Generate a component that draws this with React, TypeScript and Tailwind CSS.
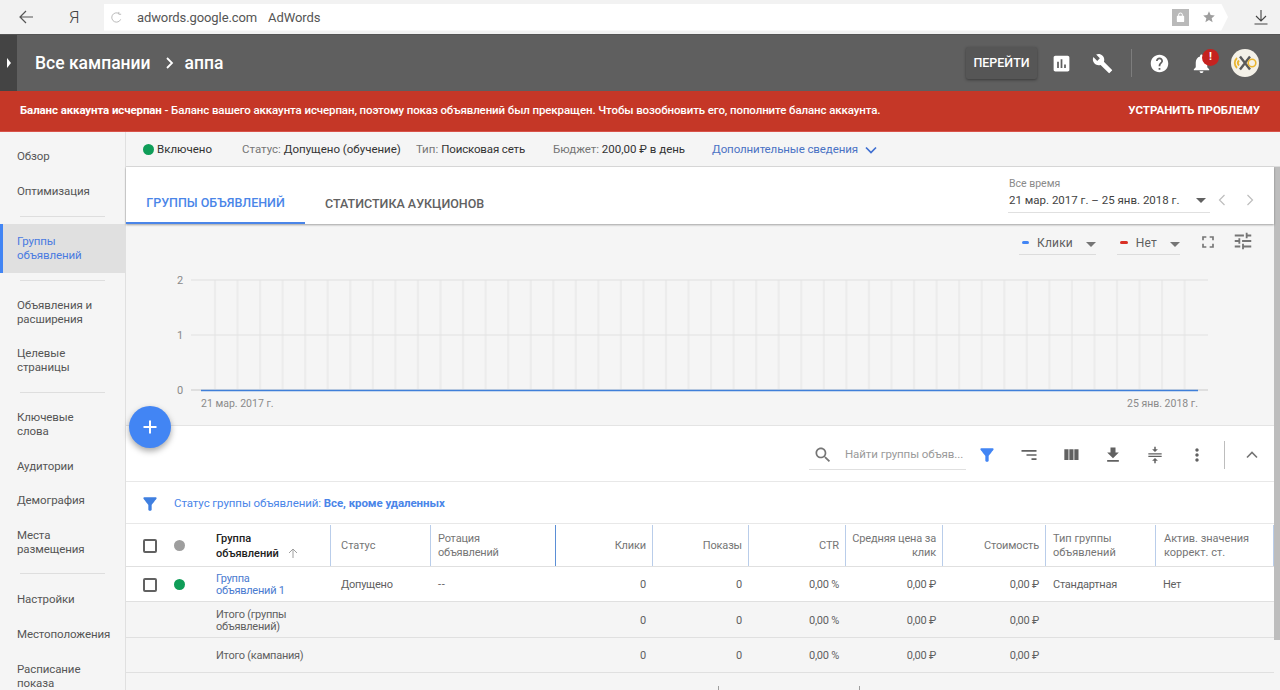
import React from "react";

const P: Record<string, string> = {
  chart: "M19 3H5c-1.1 0-2 .9-2 2v14c0 1.1.9 2 2 2h14c1.1 0 2-.9 2-2V5c0-1.1-.9-2-2-2zM9 17H7v-7h2v7zm4 0h-2V7h2v10zm4 0h-2v-4h2v4z",
  wrench: "M22.7 19l-9.1-9.1c.9-2.3.4-5-1.5-6.9-2-2-5-2.4-7.4-1.3L9 6 6 9 1.6 4.7C.4 7.1.9 10.1 2.9 12.1c1.9 1.9 4.6 2.4 6.9 1.5l9.1 9.1c.4.4 1 .4 1.4 0l2.3-2.3c.5-.4.5-1.1.1-1.4z",
  help: "M12 2C6.48 2 2 6.48 2 12s4.48 10 10 10 10-4.48 10-10S17.52 2 12 2zm1 17h-2v-2h2v2zm2.07-7.75l-.9.92C13.45 12.9 13 13.5 13 15h-2v-.5c0-1.1.45-2.1 1.17-2.83l1.24-1.26c.37-.36.59-.86.59-1.41 0-1.1-.9-2-2-2s-2 .9-2 2H8c0-2.21 1.79-4 4-4s4 1.79 4 4c0 .88-.36 1.68-.93 2.25z",
  bell: "M12 22c1.1 0 2-.9 2-2h-4c0 1.1.89 2 2 2zm6-6v-5c0-3.07-1.64-5.64-4.5-6.32V4c0-.83-.67-1.5-1.5-1.5s-1.5.67-1.5 1.5v.68C7.63 5.36 6 7.92 6 11v5l-2 2v1h16v-1l-2-2z",
  filter: "M4.25 5.61C6.27 8.2 10 13 10 13v6c0 .55.45 1 1 1h2c.55 0 1-.45 1-1v-6s3.72-4.8 5.74-7.39C20.25 4.95 19.78 4 18.95 4H5.04c-.83 0-1.3.95-.79 1.61z",
  sort: "M21 18h-6v-2h6v2zM21 6v2H3V6h18zm0 7H9v-2h12v2z",
  cols: "M10 18h5V5h-5v13zm-6 0h5V5H4v13zM16 5v13h5V5h-5z",
  download: "M19 9h-4V3H9v6H5l7 7 7-7zM5 18v2h14v-2H5z",
  density: "M4 10h16v1.5H4zM4 13h16v1.5H4zM11.1 2v3H8.5l3.5 3.5L15.5 5h-2.6V2zM11.1 22h1.8v-3h2.6L12 15.5 8.5 19h2.6z",
  more: "M12 8c1.1 0 2-.9 2-2s-.9-2-2-2-2 .9-2 2 .9 2 2 2zm0 2c-1.1 0-2 .9-2 2s.9 2 2 2 2-.9 2-2-.9-2-2-2zm0 6c-1.1 0-2 .9-2 2s.9 2 2 2 2-.9 2-2-.9-2-2-2z",
  full: "M7 14H5v5h5v-2H7v-3zm-2-4h2V7h3V5H5v5zm12 7h-3v2h5v-5h-2v3zM14 5v2h3v3h2V5h-5z",
  tune: "M3 17v2h6v-2H3zM3 5v2h10V5H3zm10 16v-2h8v-2h-8v-2h-2v6h2zM7 9v2H3v2h4v2h2V9H7zm14 4v-2H11v2h10zm-6-4h2V7h4V5h-4V3h-2v6z",
  star: "M12 17.27L18.18 21l-1.64-7.03L22 9.24l-7.19-.61L12 2 9.19 8.63 2 9.24l5.46 4.73L5.82 21z",
  lock: "M18 8h-1V6c0-2.76-2.24-5-5-5S7 3.24 7 6v2H6c-1.1 0-2 .9-2 2v10c0 1.1.9 2 2 2h12c1.1 0 2-.9 2-2V10c0-1.1-.9-2-2-2zM9 6c0-1.66 1.34-3 3-3s3 1.34 3 3v2H9V6z",
  search: "M15.5 14h-.79l-.28-.27C15.41 12.59 16 11.11 16 9.5 16 5.91 13.09 3 9.5 3S3 5.91 3 9.5 5.91 16 9.5 16c1.61 0 3.09-.59 4.23-1.57l.27.28v.79l5 4.99L20.49 19l-4.99-5zm-6 0C7.01 14 5 11.99 5 9.5S7.01 5 9.5 5 14 7.01 14 9.5 11.99 14 9.5 14z",
};

function Ic({ d, s = 24, c = "text-[#616161]" }: { d: string; s?: number; c?: string }) {
  return (
    <svg width={s} height={s} viewBox="0 0 24 24" fill="currentColor" className={c}>
      <path d={P[d]} />
    </svg>
  );
}

function Caret({ c = "border-t-[#757575]" }: { c?: string }) {
  return <span className={`inline-block w-0 h-0 border-x-[5px] border-x-transparent border-t-[5px] ${c}`} />;
}

function Nav({ children, active, c = "" }: { children: React.ReactNode; active?: boolean; c?: string }) {
  return (
    <div
      className={
        active
          ? "h-[49px] flex items-center pl-[14px] pr-2 pb-[2px] border-l-[3px] border-[#4285f4] bg-[#e0e0e0] text-[#4a7be0] leading-[14px]"
          : `flex items-center min-h-[35px] py-[10.5px] pl-[17px] pr-1 leading-[14px] text-[#555] ${c}`
      }
    >
      <span>{children}</span>
    </div>
  );
}

function Div({ c }: { c: string }) {
  return <div className={`mx-5 h-px bg-[#dedede] ${c}`} />;
}

const GRID = "grid grid-cols-[205px_100px_125px_97px_96px_97px_97px_103px_110px_118px]";

function Head({ children, right, dark, c = "" }: { children: React.ReactNode; right?: boolean; dark?: boolean; c?: string }) {
  return (
    <div
      className={`flex items-center border-r text-[11px] whitespace-nowrap ${dark ? "border-[#5b8fd6]" : "border-[#b9cdea]"} ${
        right ? "justify-end text-right pr-[6px] tracking-[-0.15px]" : "pl-[7px]"
      } leading-[14px] text-[#757575] ${c}`}
    >
      <span>{children}</span>
    </div>
  );
}

function Box() {
  return <span className="block w-[14px] h-[14px] border-2 border-[#616161] rounded-[2px] bg-white" />;
}

function Cell({ children, right, c = "" }: { children?: React.ReactNode; right?: boolean; c?: string }) {
  return (
    <div className={`flex items-center leading-[12px] ${right ? "justify-end pr-[7px]" : "pl-[7px]"} text-[#5f5f5f] ${c}`}>
      {children}
    </div>
  );
}

function Row({
  first,
  status,
  rot,
  type,
  adj,
  h,
  bg,
  check,
  c = "",
}: {
  first: React.ReactNode;
  status?: string;
  rot?: string;
  type?: string;
  adj?: string;
  h: string;
  bg: string;
  check?: boolean;
  c?: string;
}) {
  return (
    <div className={`${GRID} ${h} ${bg} border-b border-[#e0e0e0] text-[11px] tracking-[-0.25px] ${c}`}>
      <div className="flex items-center">
        <div className="w-[90px] flex items-center pl-[17px] shrink-0">
          {check && (
            <>
              <Box />
              <span className="ml-[17px] w-[11px] h-[11px] rounded-full bg-[#0f9d58]" />
            </>
          )}
        </div>
        <div className="leading-[12px]">{first}</div>
      </div>
      <Cell c="pl-[10px]">{status}</Cell>
      <Cell c="tracking-[0.6px]">{rot}</Cell>
      <Cell right>0</Cell>
      <Cell right>0</Cell>
      <Cell right>0,00 %</Cell>
      <Cell right>0,00 ₽</Cell>
      <Cell right>0,00 ₽</Cell>
      <Cell>{type}</Cell>
      <Cell>{adj}</Cell>
    </div>
  );
}

export default function App() {
  const verticals = Array.from({ length: 44 }, (_, i) => 89 + i * 22.55);
  return (
    <div className="h-[690px] overflow-hidden flex flex-col bg-[#f5f5f5] relative font-['Roboto',sans-serif] text-[11.5px]">
      {/* browser bar */}
      <div className="h-[35px] shrink-0 flex items-center bg-[#f2f2f2] border-b border-[#555]">
        <div className="w-[52px] flex justify-center">
          <svg width="14" height="14" viewBox="0 0 14 14" fill="none" stroke="#555" strokeWidth="1.2">
            <path d="M14 7H1M7 1L1 7l6 6" />
          </svg>
        </div>
        <div className="w-[52px] text-[17px] font-light text-[#444] pl-[17px] pt-[2px]">Я</div>
        <div className="w-[1124px] h-[27px] bg-white flex items-center pl-[6px] [clip-path:polygon(0_0,99.4%_0,100%_50%,99.4%_100%,0_100%)]">
          <svg width="13" height="13" viewBox="0 0 14 14" fill="none" stroke="#b5b5b5" strokeWidth="1">
            <path d="M11.5 9A5 5 0 1 1 9.5 2.7M9.5 1v2.5H12" />
          </svg>
          <span className="ml-[14px] pt-px text-[13px] text-[#555] tracking-[-0.1px]">adwords.google.com</span>
          <span className="ml-[11px] pt-px text-[13px] text-[#555] tracking-[-0.1px]">AdWords</span>
          <div className="ml-auto flex items-center pr-[12px]">
            <span className="w-[17px] h-[17px] bg-[#b9b9b9] flex items-center justify-center">
              <Ic d="lock" s={11} c="text-white" />
            </span>
            <span className="ml-[13px]">
              <Ic d="star" s={14} c="text-[#9e9e9e]" />
            </span>
          </div>
        </div>
        <div className="ml-auto pr-[12px]">
          <svg width="14" height="16" viewBox="0 0 14 16" fill="none" stroke="#444" strokeWidth="1.1">
            <path d="M7 1v11M2 7l5 5 5-5M0.5 15h13" />
          </svg>
        </div>
      </div>

      {/* app header */}
      <div className="h-[56px] shrink-0 flex items-center bg-[#5f5f5f] text-white">
        <div className="w-[17px] h-full bg-[#444] flex items-center justify-center">
          <span className="w-0 h-0 border-y-[5px] border-y-transparent border-l-[4px] border-l-white" />
        </div>
        <span className="ml-[18px] text-[17.5px] font-medium">Все кампании</span>
        <svg width="10" height="12" viewBox="0 0 10 12" fill="none" stroke="white" strokeWidth="1.8" className="ml-[14px]">
          <path d="M2 1l5 5-5 5" />
        </svg>
        <span className="ml-[10px] text-[17.5px] font-medium">аппа</span>
        <div className="ml-auto flex items-center pr-[21px]">
          <div className="w-[71px] h-[32px] bg-[#565656] rounded-[2px] shadow-[0_1px_3px_rgba(0,0,0,0.4)] flex items-center justify-center text-[12.5px] font-medium">
            ПЕРЕЙТИ
          </div>
          <span className="ml-[12px] w-[24px] flex justify-center">
            <Ic d="chart" s={21} c="text-white" />
          </span>
          <span className="ml-[17px] w-[24px] flex justify-center">
            <Ic d="wrench" s={21} c="text-white" />
          </span>
          <span className="ml-[17px] w-px h-[28px] bg-[#7d7d7d]" />
          <span className="ml-[15px] w-[24px] flex justify-center">
            <Ic d="help" s={21} c="text-white" />
          </span>
          <span className="ml-[18px] w-[24px] flex justify-center relative">
            <Ic d="bell" s={23} c="text-white" />
            <span className="absolute -top-[3px] left-[13px] w-[17px] h-[17px] rounded-full bg-[#c5221f] text-white text-[11px] font-bold flex items-center justify-center">
              !
            </span>
          </span>
          <span className="ml-[18px]">
            <svg width="28" height="28" viewBox="0 0 28 28" className="block">
              <circle cx="14" cy="14" r="14" fill="#f4f1e8" />
              <path d="M9 7.5l10 13M19 7.5l-10 13" stroke="#5a5a5a" strokeWidth="2.4" fill="none" />
              <path d="M6 9C3 12 3 16 6 19M8 11.5c-1.5 1.5-1.5 3.5 0 5" stroke="#eab530" strokeWidth="1.8" fill="none" />
              <circle cx="21" cy="14" r="3.8" stroke="#eab530" strokeWidth="1.6" fill="none" />
            </svg>
          </span>
        </div>
      </div>

      {/* alert */}
      <div className="h-[41px] shrink-0 flex items-center justify-between bg-[#c53727] text-white pl-5 pr-5 border-b border-[#d9534a]">
        <span className="text-[11.5px] tracking-[-0.11px]">
          <span className="font-bold">Баланс аккаунта исчерпан</span>
          <span className="font-medium"> - Баланс вашего аккаунта исчерпан, поэтому показ объявлений был прекращен. Чтобы возобновить его, пополните баланс аккаунта.</span>
        </span>
        <span className="text-[11.5px] font-bold">УСТРАНИТЬ ПРОБЛЕМУ</span>
      </div>

      {/* body */}
      <div className="flex-1 flex min-h-0">
        <aside className="w-[126px] shrink-0 border-r border-[#e0e0e0] pt-[6px] text-[11.5px] tracking-[-0.1px]">
          <Nav>Обзор</Nav>
          <Nav>Оптимизация</Nav>
          <Div c="mt-[8px] mb-[7px]" />
          <Nav active>
            Группы
            <br />
            объявлений
          </Nav>
          <Div c="mt-[7px] mb-[6px]" />
          <Nav>
            Объявления и
            <br />
            расширения
          </Nav>
          <Nav c="-mt-px">
            Целевые
            <br />
            страницы
          </Nav>
          <Div c="mt-[8px] mb-[6px]" />
          <Nav>
            Ключевые
            <br />
            слова
          </Nav>
          <Nav>Аудитории</Nav>
          <Nav c="-mt-px">Демография</Nav>
          <Nav>
            Места
            <br />
            размещения
          </Nav>
          <Div c="mt-[7px] mb-[7px]" />
          <Nav>Настройки</Nav>
          <Nav>Местоположения</Nav>
          <Nav>
            Расписание
            <br />
            показа
          </Nav>
        </aside>

        <div className="flex-1 flex flex-col min-w-0">
          {/* summary */}
          <div className="h-[35px] shrink-0 flex items-center pt-px border-b border-[#dcdcdc] text-[#757575] pl-[17px]">
            <span className="w-[11px] h-[11px] rounded-full bg-[#0f9d58]" />
            <span className="ml-[3px] text-[#333]">Включено</span>
            <span className="ml-[30px]">Статус:</span>
            <span className="ml-[3px] text-[#333]">Допущено (обучение)</span>
            <span className="ml-[15px]">Тип:</span>
            <span className="ml-[3px] text-[#333] tracking-[-0.15px]">Поисковая сеть</span>
            <span className="ml-[28px] tracking-[-0.1px]">Бюджет:</span>
            <span className="ml-[3px] text-[#333]">200,00 ₽ в день</span>
            <span className="ml-[27px] text-[#4a72c4] tracking-[-0.1px]">Дополнительные сведения</span>
            <svg width="12" height="8" viewBox="0 0 12 8" fill="none" stroke="#3f6fd1" strokeWidth="1.7" className="ml-[7px]">
              <path d="M1 1.5l5 5 5-5" />
            </svg>
          </div>

          <div className="flex-1 flex min-h-0">
            <main className="w-[1148px] shrink-0 flex flex-col">
              {/* tabs */}
              <div className="h-[57px] shrink-0 bg-white flex items-stretch shadow-[0_1px_2px_rgba(0,0,0,0.35)] relative z-10">
                <div className="w-[179px] border-b-2 border-[#4a85e8] flex items-center justify-center pt-[17px] text-[12.5px] font-medium text-[#4a85e8]">
                  ГРУППЫ ОБЪЯВЛЕНИЙ
                </div>
                <div className="ml-[20px] flex items-center pt-[17px] text-[12.5px] font-medium text-[#616161]">
                  СТАТИСТИКА АУКЦИОНОВ
                </div>
                <div className="ml-auto flex items-start">
                  <div className="w-[202px] mt-[10px] h-[36px] border-b border-[#e0e0e0] pl-px mr-[1px]">
                    <div className="text-[10.5px] leading-[14px] text-[#8a8a8a]">Все время</div>
                    <div className="flex items-center justify-between text-[11.5px] leading-[18px] text-[#424242] pr-[4px]">
                      <span>21 мар. 2017 г. – 25 янв. 2018 г.</span>
                      <Caret c="border-t-[#616161]" />
                    </div>
                  </div>
                  <div className="flex items-center mt-[27px] pr-[20px] pl-[7px]">
                    <svg width="8" height="12" viewBox="0 0 8 12" fill="none" stroke="#bdbdbd" strokeWidth="1.2">
                      <path d="M6.5 1L1.5 6l5 5" />
                    </svg>
                    <svg width="8" height="12" viewBox="0 0 8 12" fill="none" stroke="#bdbdbd" strokeWidth="1.2" className="ml-[20px]">
                      <path d="M1.5 1l5 5-5 5" />
                    </svg>
                  </div>
                </div>
              </div>

              {/* chart */}
              <div className="h-[202px] shrink-0 border-b border-[#e4e4e4] bg-[#f5f5f5] flex flex-col">
                <div className="h-[40px] shrink-0 flex items-start justify-end pt-[7px] pr-[20px]">
                  <div className="w-[77px] h-[24px] border-b border-[#dcdcdc] flex items-center pl-[3px] text-[12px] text-[#5f5f5f]">
                    <span className="w-[8px] h-[3px] rounded-sm bg-[#4285f4]" />
                    <span className="ml-[8px] tracking-[0.2px]">Клики</span>
                    <span className="ml-[13px]">
                      <Caret />
                    </span>
                  </div>
                  <div className="ml-[21px] w-[63px] h-[24px] border-b border-[#dcdcdc] flex items-center pl-[3px] text-[12px] text-[#5f5f5f]">
                    <span className="w-[8px] h-[3px] rounded-sm bg-[#d93025]" />
                    <span className="ml-[8px] tracking-[0.2px]">Нет</span>
                    <span className="ml-[13px]">
                      <Caret />
                    </span>
                  </div>
                  <span className="ml-[18px] mt-[1px]">
                    <Ic d="full" s={20} c="text-[#757575]" />
                  </span>
                  <span className="ml-[14px] mt-[-1px]">
                    <Ic d="tune" s={22} c="text-[#757575]" />
                  </span>
                </div>
                <svg width="1148" height="161" viewBox="0 0 1148 161" className="block">
                  {verticals.map((x) => (
                    <line key={x} x1={x} x2={x} y1="16" y2="125" stroke="#ececec" strokeWidth="2.2" />
                  ))}
                  <line x1="65" x2="1082" y1="16" y2="16" stroke="#dfdfdf" strokeWidth="1.2" />
                  <line x1="65" x2="1082" y1="71" y2="71" stroke="#e2e2e2" strokeWidth="1.2" />
                  <line x1="65" x2="1082" y1="126" y2="126" stroke="#c9c9c9" />
                  <line x1="75" x2="1072" y1="126.5" y2="126.5" stroke="#3f7fd9" strokeWidth="1.6" />
                  <text x="54" y="20" textAnchor="middle" fontSize="11" fill="#8a8a8a">2</text>
                  <text x="54" y="75" textAnchor="middle" fontSize="11" fill="#8a8a8a">1</text>
                  <text x="54" y="130" textAnchor="middle" fontSize="11" fill="#8a8a8a">0</text>
                  <text x="75" y="143" fontSize="10.5" fill="#8a8a8a">21 мар. 2017 г.</text>
                  <text x="1072" y="143" textAnchor="end" fontSize="10.5" fill="#8a8a8a">25 янв. 2018 г.</text>
                </svg>
              </div>

              {/* toolbar */}
              <div className="h-[56px] shrink-0 bg-white border-b border-[#e8e8e8] flex items-center justify-end pr-[8px] pt-[2px]">
                <div className="w-[157px] h-[28px] mt-[2px] border-b border-[#e0e0e0] flex items-center pl-[4px]">
                  <Ic d="search" s={20} c="text-[#757575]" />
                  <span className="ml-[12px] text-[#9a9a9a] tracking-[-0.08px] whitespace-nowrap">Найти группы объяв...</span>
                </div>
                {(["filter", "sort", "cols", "download", "density", "more"] as const).map((k) => (
                  <span key={k} className="w-[42px] flex justify-center">
                    <Ic d={k} s={20} c={k === "filter" ? "text-[#4285f4]" : "text-[#616161]"} />
                  </span>
                ))}
                <span className="ml-[6px] w-px h-[28px] bg-[#bdbdbd]" />
                <span className="ml-[13px] w-[28px] flex justify-center">
                  <svg width="12" height="8" viewBox="0 0 12 8" fill="none" stroke="#757575" strokeWidth="1.6">
                    <path d="M1 6.5l5-5 5 5" />
                  </svg>
                </span>
              </div>

              {/* filter row */}
              <div className="h-[42px] shrink-0 bg-white border-b border-[#e8e8e8] flex items-center pt-[2px] pl-[14px] text-[#4a85e8]">
                <Ic d="filter" s={20} c="text-[#3f7fe0]" />
                <span className="ml-[14px] tracking-[-0.08px]">
                  Статус группы объявлений: <span className="font-bold">Все, кроме удаленных</span>
                </span>
              </div>

              {/* table */}
              <div className={`${GRID} h-[43px] shrink-0 bg-white border-b border-[#e0e0e0] pt-px`}>
                <div className="flex items-center border-r border-[#b9cdea]">
                  <div className="w-[90px] flex items-center pl-[17px] shrink-0">
                    <Box />
                    <span className="ml-[17px] w-[11px] h-[11px] rounded-full bg-[#9e9e9e]" />
                  </div>
                  <div className="leading-[15px] text-[11px] font-medium text-[#212121]">
                    Группа
                    <br />
                    <span className="inline-flex items-center">
                      объявлений
                      <svg width="10" height="10" viewBox="0 0 10 10" fill="none" stroke="#9e9e9e" strokeWidth="1" className="ml-[9px]">
                        <path d="M5 10V1M1 5l4-4 4 4" />
                      </svg>
                    </span>
                  </div>
                </div>
                <Head c="pl-[10px]">Статус</Head>
                <Head dark c="tracking-[-0.2px]">
                  Ротация
                  <br />
                  объявлений
                </Head>
                <Head right>Клики</Head>
                <Head right>Показы</Head>
                <Head right>CTR</Head>
                <Head right>
                  Средняя цена за
                  <br />
                  клик
                </Head>
                <Head right>Стоимость</Head>
                <Head>
                  Тип группы
                  <br />
                  объявлений
                </Head>
                <Head c="pl-[8px]">
                  Актив. значения
                  <br />
                  коррект. ст.
                </Head>
              </div>
              <Row
                check
                h="h-[35px]"
                bg="bg-white"
                c="pt-px"
                status="Допущено"
                rot="--"
                type="Стандартная"
                adj="Нет"
                first={
                  <span className="text-[#4a7bd0]">
                    Группа
                    <br />
                    объявлений 1
                  </span>
                }
              />
              <Row
                h="h-[36px]"
                bg="bg-[#f5f5f5]"
                c="pt-[2px]"
                first={
                  <span className="text-[#5f5f5f]">
                    Итого (группы
                    <br />
                    объявлений)
                  </span>
                }
              />
              <Row h="h-[35px]" bg="bg-[#f5f5f5]" c="pt-[2px]" first={<span className="text-[#5f5f5f]">Итого (кампания)</span>} />
              <div className="flex-1 flex items-end pl-[592px]">
                <span className="w-px h-[4px] bg-[#9e9e9e]" />
                <span className="ml-[140px] w-px h-[4px] bg-[#9e9e9e]" />
              </div>
            </main>
            <div className="w-[6px] shrink-0">
              <div className="h-[473px] bg-[#bdbdbd]" />
            </div>
          </div>
        </div>
      </div>

      {/* FAB */}
      <div className="absolute left-[129px] top-[406px] w-[42px] h-[42px] rounded-full bg-[#4285f4] shadow-[0_3px_6px_rgba(0,0,0,0.35)] flex items-center justify-center">
        <svg width="14" height="14" viewBox="0 0 14 14" stroke="white" strokeWidth="2">
          <path d="M7 0.5v13M0.5 7h13" />
        </svg>
      </div>
    </div>
  );
}
